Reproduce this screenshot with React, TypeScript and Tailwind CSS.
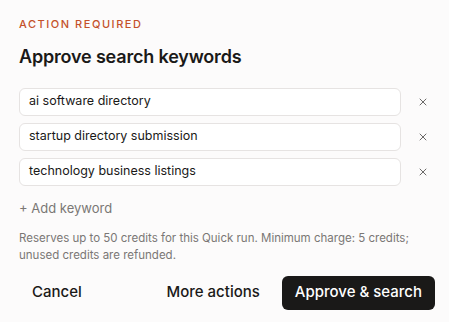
import { X } from 'lucide-react'

const keywords = ['ai software directory', 'startup directory submission', 'technology business listings']

const App = () => {
    return (
        <div className="h-[322px] w-[449px] bg-[#fcfbfb] pl-[19px] pr-[14px] pt-[16px] font-['Inter',sans-serif] text-[#1a1918]">
            <p className="text-[11px] font-medium tracking-[0.14em] text-[#c4512a]">ACTION REQUIRED</p>
            <h1 className="mt-[11px] text-[18px] font-semibold leading-[26px] tracking-[-0.01em]">Approve search keywords</h1>

            <div className="mt-[18px] flex flex-col gap-[7px]">
                {keywords.map((k) => (
                    <div key={k} className="flex items-center">
                        <div className="flex h-[28px] w-[382px] items-center rounded-[6px] border border-[#e6e3e2] bg-white px-[9px] text-[12.5px]">
                            {k}
                        </div>
                        <button className="ml-[15px] flex h-[20px] w-[14px] items-center justify-center text-[#6b6968]">
                            <X size={12} strokeWidth={2} />
                        </button>
                    </div>
                ))}
            </div>

            <button className="mt-[13px] text-[13px] text-[#7a7775]">+ Add keyword</button>

            <p className="mt-[11px] text-[11.5px] leading-[17px] text-[#7a7775]">
                Reserves up to 50 credits for this Quick run. Minimum charge: 5 credits; unused credits are refunded.
            </p>

            <div className="mt-[12px] flex items-center justify-between">
                <button className="h-[34px] rounded-[6px] px-[13px] text-[15px] font-medium">Cancel</button>
                <div className="flex items-center gap-[6px]">
                    <button className="h-[34px] rounded-[6px] px-[16px] text-[15px] font-medium">More actions</button>
                    <button className="h-[34px] rounded-[6px] bg-[#1a1918] px-[13px] text-[15px] font-medium text-white">
                        Approve &amp; search
                    </button>
                </div>
            </div>
        </div>
    )
}

export default App
